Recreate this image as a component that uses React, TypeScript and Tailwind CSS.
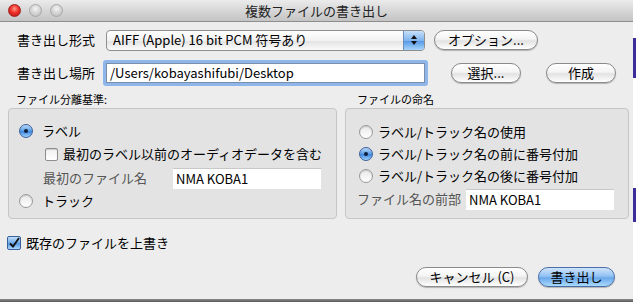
import React from "react";

const font = { fontFamily: '"Noto Sans CJK JP", "Liberation Sans", sans-serif' };

const Light = ({ red }: { red?: boolean }) => (
  <div
    className={
      red
        ? "w-[13px] h-[13px] rounded-full border border-[#a0201c] bg-[radial-gradient(circle_at_50%_35%,_#ff9a8a_0%,_#f0302a_45%,_#b01510_100%)]"
        : "w-[13px] h-[13px] rounded-full border border-[#a8a8a8] bg-[radial-gradient(circle_at_50%_35%,_#f4f4f4_0%,_#d4d4d4_50%,_#b8b8b8_100%)]"
    }
  />
);

const AquaButton = ({ label, w, primary }: { label: string; w: string; primary?: boolean }) => (
  <div
    className={`${w} h-[20px] rounded-full flex items-center justify-center text-[13px] text-black border shadow-[0_1px_1px_rgba(0,0,0,0.25)] ${
      primary
        ? "border-[#4a6fa8] bg-[linear-gradient(to_bottom,_#cfe4fb_0%,_#93c2f3_45%,_#6aa8ec_55%,_#a9dafc_100%)]"
        : "border-[#8a8a8a] bg-[linear-gradient(to_bottom,_#ffffff_0%,_#f4f4f4_45%,_#e2e2e2_55%,_#ffffff_100%)]"
    }`}
  >
    {label}
  </div>
);

const Radio = ({ on }: { on?: boolean }) =>
  on ? (
    <div className="w-[14px] h-[14px] rounded-full border border-[#3a5f9a] bg-[linear-gradient(to_bottom,_#b8d8f8_0%,_#5b9de6_50%,_#3f86df_55%,_#9fd3fb_100%)] flex items-center justify-center shrink-0">
      <div className="w-[4px] h-[4px] rounded-full bg-[#10203a]" />
    </div>
  ) : (
    <div className="w-[14px] h-[14px] rounded-full border border-[#9a9a9a] bg-[linear-gradient(to_bottom,_#e8e8e8_0%,_#ffffff_100%)] shadow-[inset_0_1px_1px_rgba(0,0,0,0.15)] shrink-0" />
  );

const RadioRow = ({ on, label, className }: { on?: boolean; label: string; className?: string }) => (
  <div className={`flex items-center gap-[5px] text-[13px] text-black h-[20px] ${className ?? ""}`}>
    <Radio on={on} />
    <span>{label}</span>
  </div>
);

const Field = ({ value, w }: { value: string; w: string }) => (
  <div className={`${w} h-[21px] bg-white border-t border-[#c8c8c8] flex items-center px-[3px] text-[13px] text-black`}>
    {value}
  </div>
);

export default function App() {
  return (
    <div className="w-[636px] h-[302px] flex bg-white overflow-hidden" style={font}>
      <div className="w-[633px] flex flex-col">
        <div className="h-[299px] flex flex-col bg-[#ededed]">
          {/* Title bar */}
          <div className="h-[22px] flex items-center px-[8px] bg-[linear-gradient(to_bottom,_#ebebeb_0%,_#d7d7d7_50%,_#c4c4c4_100%)] border-b border-[#8e8e8e] relative">
            <div className="flex gap-[8px]">
              <Light red />
              <Light />
              <Light />
            </div>
            <div className="absolute inset-0 flex items-center justify-center text-[13px] text-[#222]">
              複数ファイルの書き出し
            </div>
          </div>

          {/* Format row */}
          <div className="flex items-center mt-[7px] pl-[17px] h-[22px]">
            <span className="w-[89px] text-[13px] text-black">書き出し形式</span>
            <div className="w-[319px] h-[21px] rounded-[4px] border border-[#8e8e8e] flex items-stretch overflow-hidden bg-[linear-gradient(to_bottom,_#ffffff_0%,_#f2f2f2_50%,_#e4e4e4_55%,_#fbfbfb_100%)]">
              <span className="flex-1 flex items-center pl-[6px] text-[13px] text-black">AIFF (Apple) 16 bit PCM 符号あり</span>
              <div className="w-[21px] border-l border-[#6c8cc0] flex flex-col items-center justify-center gap-[2px] bg-[linear-gradient(to_bottom,_#c6e0fa_0%,_#7fb4ee_50%,_#5a9ae6_55%,_#a6d6fb_100%)]">
                <div className="w-0 h-0 border-l-[3px] border-r-[3px] border-b-[4px] border-l-transparent border-r-transparent border-b-[#111]" />
                <div className="w-0 h-0 border-l-[3px] border-r-[3px] border-t-[4px] border-l-transparent border-r-transparent border-t-[#111]" />
              </div>
            </div>
            <div className="ml-[9px]">
              <AquaButton label="オプション..." w="w-[104px]" />
            </div>
          </div>

          {/* Location row */}
          <div className="flex items-center mt-[9px] pl-[17px] h-[26px]">
            <span className="w-[86px] text-[13px] text-black">書き出し場所</span>
            <div className="w-[325px] h-[26px] rounded-[3px] bg-[#8fb6ea] p-[3px]">
              <div className="w-full h-full bg-white border border-[#7a8ea8] flex items-center pl-[3px] text-[13px] text-black">
                /Users/kobayashifubi/Desktop
              </div>
            </div>
            <div className="ml-[23px]">
              <AquaButton label="選択..." w="w-[70px]" />
            </div>
            <div className="ml-[25px]">
              <AquaButton label="作成" w="w-[70px]" />
            </div>
          </div>

          {/* Groups */}
          <div className="flex mt-[5px] pl-[8px] gap-[8px]">
            <div className="flex flex-col w-[329px]">
              <span className="pl-[8px] text-[11px] text-black leading-[16px]">ファイル分離基準:</span>
              <div className="mt-[1px] h-[111px] rounded-[4px] border border-[#c6c6c6] bg-[#e3e3e3] flex flex-col pl-[10px] pt-[12px]">
                <RadioRow on label="ラベル" className="gap-[9px]" />
                <div className="flex items-center gap-[5px] ml-[26px] mt-[3px] h-[20px] text-[13px] text-black">
                  <div className="w-[13px] h-[13px] rounded-[2px] border border-[#8e8e8e] bg-[linear-gradient(to_bottom,_#f0f0f0_0%,_#ffffff_100%)] shadow-[inset_0_1px_1px_rgba(0,0,0,0.15)]" />
                  <span>最初のラベル以前のオーディオデータを含む</span>
                </div>
                <div className="flex items-center ml-[24px] mt-[3px] h-[22px]">
                  <span className="w-[130px] text-[13px] text-[#555]">最初のファイル名</span>
                  <Field value="NMA KOBA1" w="w-[148px]" />
                </div>
                <RadioRow label="トラック" className="mt-[2px] gap-[9px]" />
              </div>
            </div>
            <div className="flex flex-col w-[284px]">
              <span className="pl-[12px] text-[11px] text-black leading-[16px]">ファイルの命名</span>
              <div className="mt-[1px] h-[111px] rounded-[4px] border border-[#c6c6c6] bg-[#e3e3e3] flex flex-col pl-[13px] pt-[13px]">
                <RadioRow label="ラベル/トラック名の使用" />
                <RadioRow on label="ラベル/トラック名の前に番号付加" className="mt-[2px]" />
                <RadioRow label="ラベル/トラック名の後に番号付加" className="mt-[2px]" />
                <div className="flex items-center mt-[2px] -ml-[2px] h-[22px]">
                  <span className="w-[109px] text-[13px] text-[#555]">ファイル名の前部</span>
                  <Field value="NMA KOBA1" w="w-[148px]" />
                </div>
              </div>
            </div>
          </div>

          {/* Overwrite checkbox */}
          <div className="flex items-center gap-[5px] pl-[7px] mt-[16px] h-[16px] text-[13px] text-black">
            <div className="w-[14px] h-[14px] rounded-[2px] border border-[#3a5f9a] bg-[linear-gradient(to_bottom,_#c2def9_0%,_#6fa9ea_50%,_#5596e4_55%,_#a9d8fb_100%)] flex items-center justify-center">
              <svg width="12" height="12" viewBox="0 0 12 12">
                <path d="M2 6.5 L5 9.5 L11 1" fill="none" stroke="#111" strokeWidth="1.8" />
              </svg>
            </div>
            <span>既存のファイルを上書き</span>
          </div>

          {/* Bottom buttons */}
          <div className="flex justify-end gap-[10px] pr-[18px] mt-[16px]">
            <AquaButton label="キャンセル (C)" w="w-[112px]" />
            <AquaButton label="書き出し" w="w-[77px]" primary />
          </div>
        </div>
        <div className="h-[3px] bg-[linear-gradient(to_bottom,_#8a8a8a_0%,_#5a5a5a_100%)]" />
      </div>
      <div className="w-[3px] flex flex-col bg-white">
        <div className="h-[38px]" />
        <div className="h-[40px] bg-[#3b2d9a]" />
        <div className="h-[110px]" />
        <div className="h-[34px] bg-[#3b2d9a]" />
      </div>
    </div>
  );
}
